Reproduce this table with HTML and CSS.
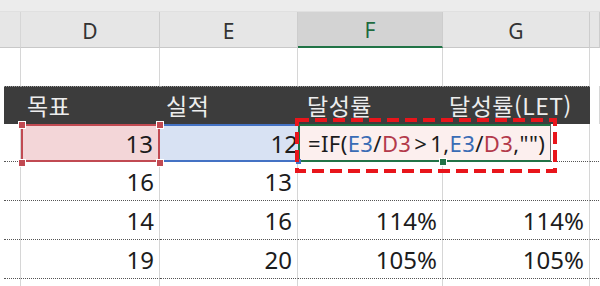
FILE: index.html
```html
<!DOCTYPE html>
<html lang="ko">
<head>
<meta charset="utf-8">
<link rel="stylesheet" href="styles.css">
</head>
<body>
<div class="sheet">
  <div class="strip"></div>

  <div class="hd corner"></div>
  <div class="hd">D</div>
  <div class="hd">E</div>
  <div class="hd active">F</div>
  <div class="hd">G</div>
  <div class="hd"></div>

  <div class="c rh blank"></div>
  <div class="c blank"></div>
  <div class="c blank"></div>
  <div class="c blank"></div>
  <div class="c blank"></div>
  <div class="c blank"></div>

  <div class="c rh dark-rh"><span></span></div>
  <div class="c dark">목표</div>
  <div class="c dark">실적</div>
  <div class="c dark f">달성률</div>
  <div class="c dark">달성률(LET)</div>
  <div class="c rh"></div>

  <div class="c rh dot"></div>
  <div class="c num sel-d">13</div>
  <div class="c num sel-e">12</div>
  <div class="c num dot"></div>
  <div class="c num dot"></div>
  <div class="c dot"></div>

  <div class="c rh dot"></div>
  <div class="c num dot">16</div>
  <div class="c num dot">13</div>
  <div class="c num dot"></div>
  <div class="c num dot"></div>
  <div class="c dot"></div>

  <div class="c rh dot"></div>
  <div class="c num dot">14</div>
  <div class="c num dot">16</div>
  <div class="c num dot">114%</div>
  <div class="c num dot">114%</div>
  <div class="c dot"></div>

  <div class="c rh dot"></div>
  <div class="c num dot">19</div>
  <div class="c num dot">20</div>
  <div class="c num dot">105%</div>
  <div class="c num dot">105%</div>
  <div class="c dot"></div>

  <div class="c rh"></div>
  <div class="c"></div>
  <div class="c"></div>
  <div class="c"></div>
  <div class="c"></div>
  <div class="c"></div>

  <span class="handle h1"></span>
  <span class="handle h2"></span>
  <span class="handle h3"></span>
  <span class="handle h4"></span>

  <div class="edit">=IF(<span class="ref-e">E3</span>/<span class="ref-d">D3</span><span class="op">&gt;</span>1,<span class="ref-e">E3</span>/<span class="ref-d">D3</span>,"")</div>
  <span class="green-dot"></span>
  <span class="blue-dot"></span>

  <svg class="mark" width="264" height="57" viewBox="0 0 264 57">
    <rect x="2" y="2" width="258" height="51" fill="none" stroke="#e8151b" stroke-width="4" stroke-dasharray="12 6"/>
  </svg>
</div>
</body>
</html>
```

FILE: styles.css
```css
* { box-sizing: border-box; }
html, body { margin: 0; padding: 0; background: #fff; }
body {
  width: 600px;
  height: 286px;
  overflow: hidden;
  font-family: "Noto Sans", "Noto Sans CJK KR", sans-serif;
}
.sheet {
  position: relative;
  display: grid;
  grid-template-columns: 21px 139px 138px 145px 147px 10px;
  grid-template-rows: 12px 36px 38px 38px 38px 39px 39px 39px 7px;
  width: 600px;
  height: 286px;
}
.strip {
  grid-column: 1 / -1;
  background: #ececec;
  border-bottom: 1px solid #e0e0e0;
}
.hd {
  background: #e6e6e6;
  border-right: 1px solid #cdcdcd;
  border-bottom: 1px solid #c8c8c8;
  color: #333;
  font-size: 21px;
  display: flex;
  align-items: center;
  justify-content: center;
  padding-top: 2px;
}
.hd.corner { border-right: 1px solid #d6d6d6; }
.hd.active {
  background: #d3d3d3;
  color: #1e6b3f;
  border-bottom: 2px solid #217346;
}
.c {
  border-right: 1px solid #d6d6d6;
  font-size: 24px;
  color: #1c1c1c;
  display: flex;
  align-items: center;
  padding: 0 5px;
  line-height: 1;
}
.rh { padding: 0; }
.blank { border-bottom: 0; }
.dark {
  background: #3c3c3c;
  color: #ededed;
  font-family: "Noto Sans CJK KR", sans-serif;
  font-size: 23px;
  border-right: 0;
  border-top: 1px dotted #9a9a9a;
  padding: 0 0 0 6px;
  letter-spacing: 0.5px;
}
.dark.f { padding-left: 9px; }
.dark-rh { border-right: 0; }
.dark-rh span {
  display: block;
  width: 17px;
  margin-left: 4px;
  height: 100%;
  background: #3c3c3c;
  border-top: 1px dotted #9a9a9a;
}
.num { justify-content: flex-end; padding-right: 5px; padding-top: 1px; }
.dot { border-bottom: 1px dotted #555; }
.rh.dot { border-bottom: 0; position: relative; }
.rh.dot::after {
  content: "";
  position: absolute;
  left: 4px;
  right: 0;
  bottom: 0;
  border-bottom: 1px dotted #555;
}
.sel-d {
  background: #f3d6d8;
  border: 2px solid #c14a52;
}
.sel-e {
  background: #d8e2f3;
  border-top: 2px solid #4472c4;
  border-bottom: 2px solid #4472c4;
  border-right: 0;
  padding-right: 0;
}
.handle {
  position: absolute;
  width: 6px;
  height: 6px;
  background: #c14a52;
  outline: 1px solid #fff;
}
.h1 { left: 19px; top: 122px; }
.h2 { left: 157px; top: 122px; }
.h3 { left: 19px; top: 160px; }
.h4 { left: 157px; top: 160px; }
.edit {
  position: absolute;
  left: 298px;
  top: 124px;
  width: 253px;
  height: 38px;
  background: #fcefee;
  border-left: 2px solid #217346;
  border-top: 2px solid #217346;
  border-bottom: 2px solid #217346;
  border-right: 1px solid #6b6b6b;
  font-size: 22px;
  color: #1c1c1c;
  display: flex;
  align-items: center;
  padding-left: 8px;
  white-space: nowrap;
  letter-spacing: 0.4px;
}
.op { margin: 0 3px; }
.ref-e { color: #3a6cb5; }
.ref-d { color: #b33a4b; }
.green-dot {
  position: absolute;
  left: 440px;
  top: 159px;
  width: 6px;
  height: 6px;
  background: #217346;
  outline: 1px solid #fff;
}
.blue-dot {
  position: absolute;
  left: 296px;
  top: 159px;
  width: 5px;
  height: 5px;
  background: #4472c4;
}
.mark {
  position: absolute;
  left: 295px;
  top: 118px;
}
```
